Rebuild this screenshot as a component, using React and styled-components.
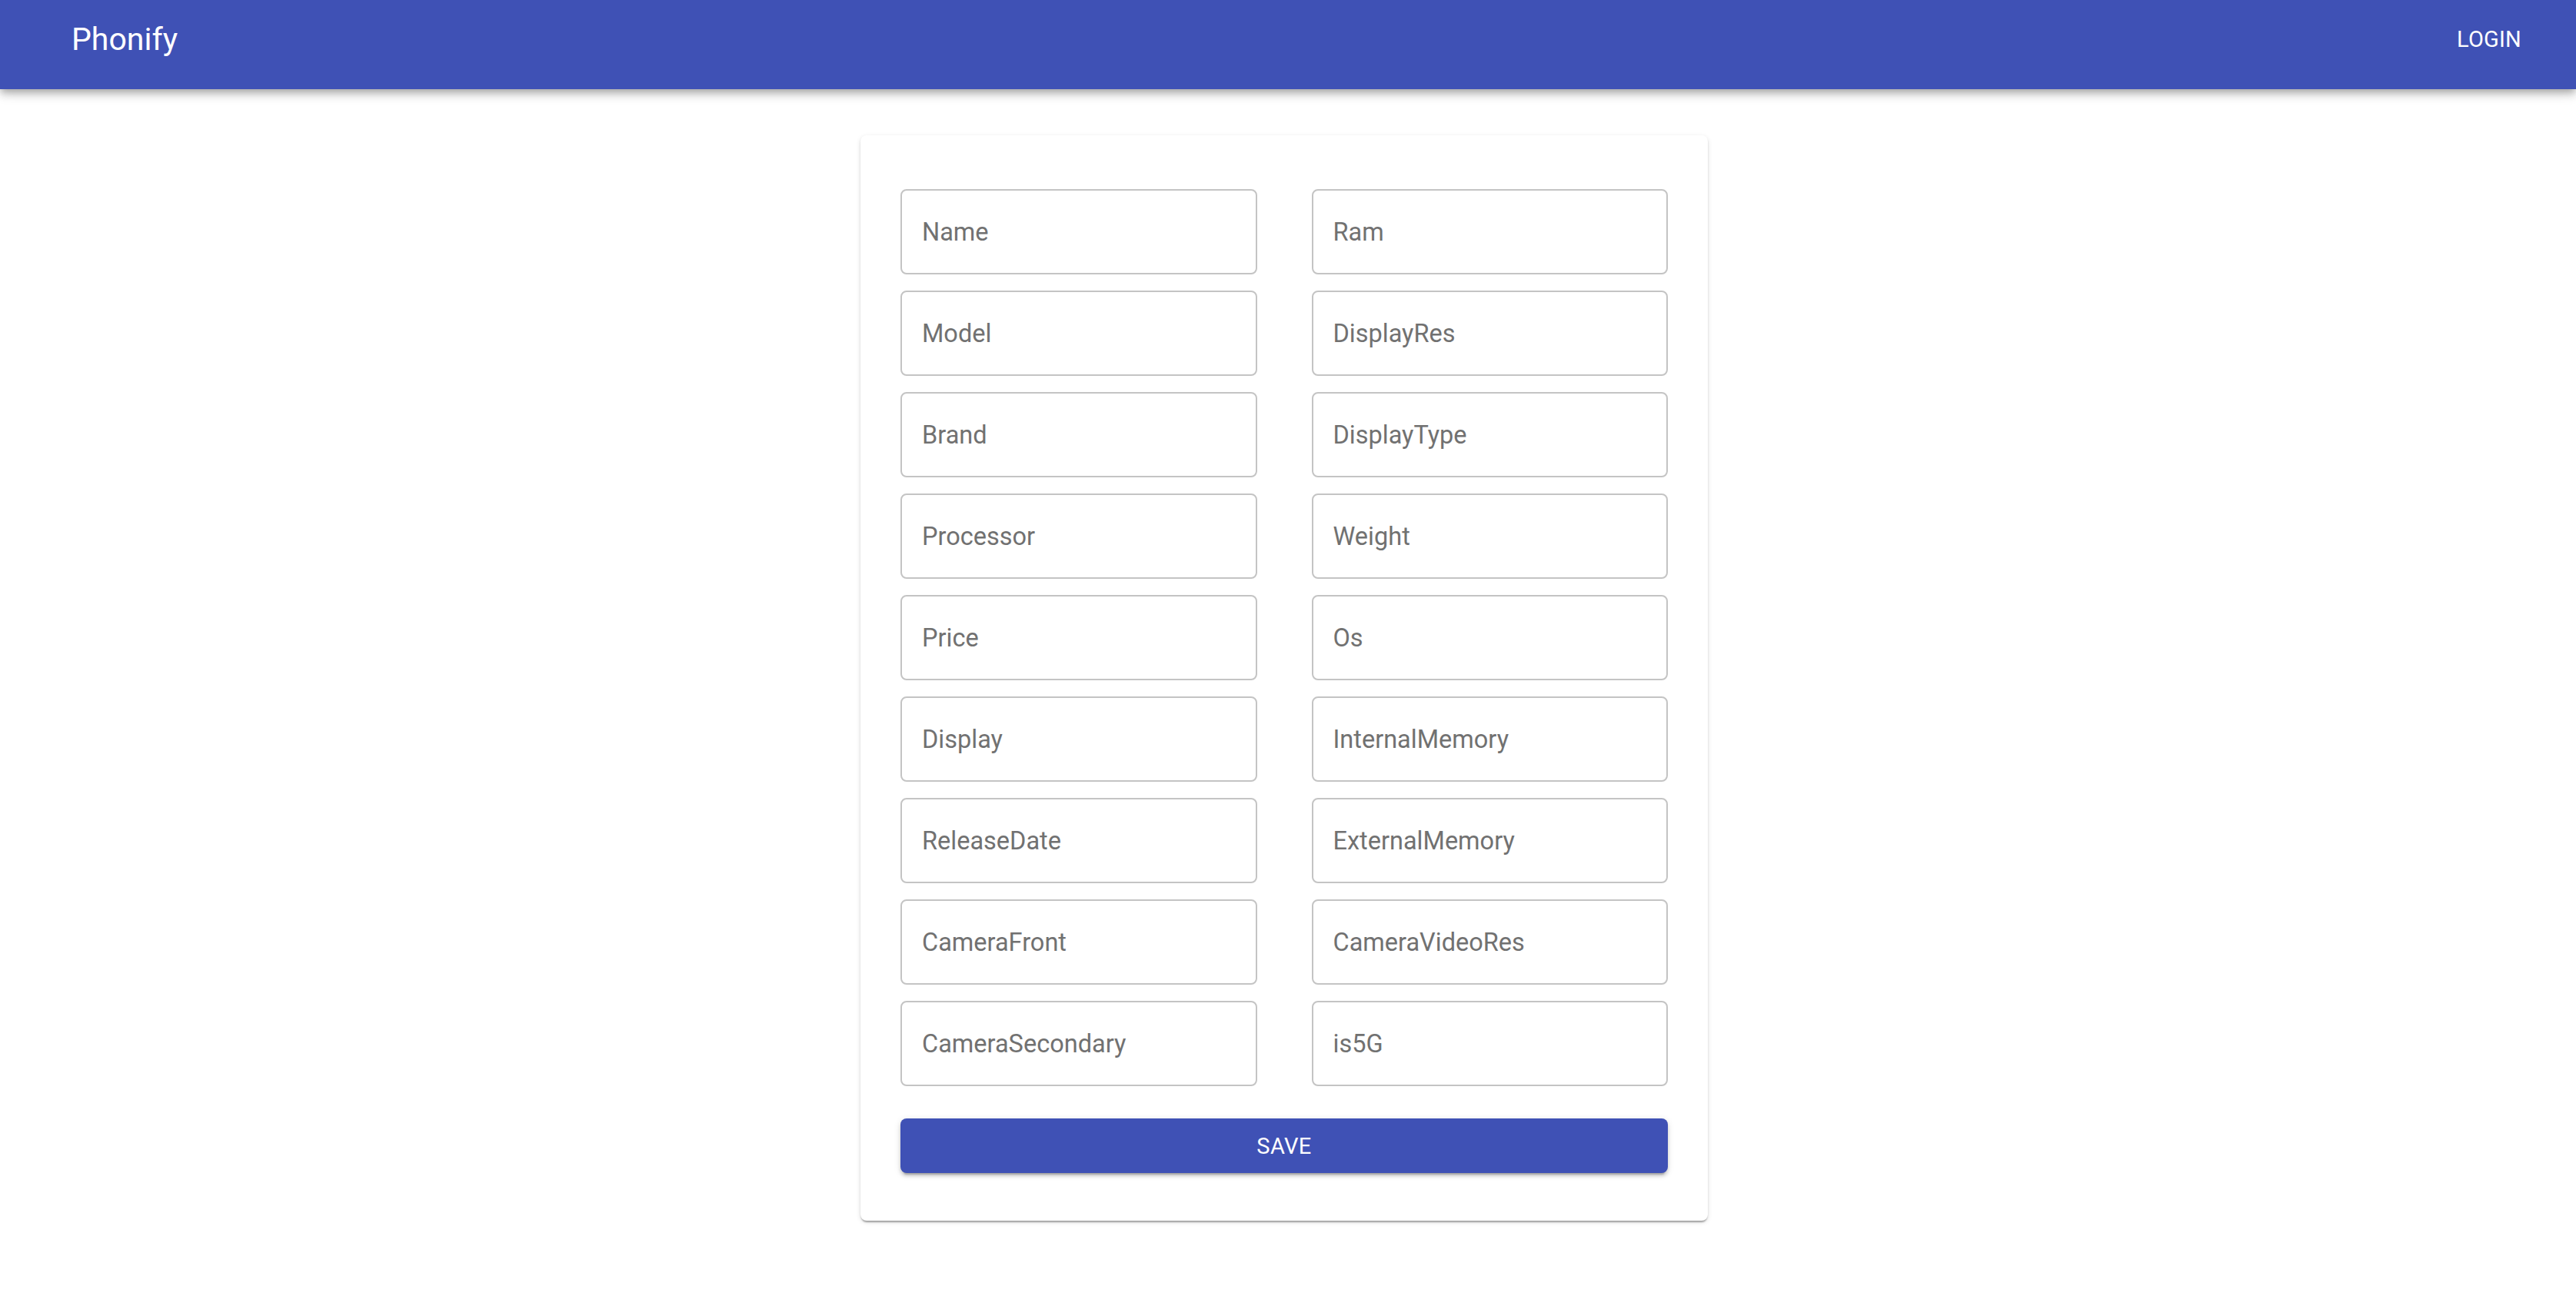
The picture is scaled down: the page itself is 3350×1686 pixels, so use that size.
import React from 'react';
import styled, { createGlobalStyle } from 'styled-components';

const GlobalStyle = createGlobalStyle`
  html, body {
    margin: 0;
    padding: 0;
    background: #fff;
    font-family: Roboto, "Liberation Sans", sans-serif;
  }
  * {
    box-sizing: border-box;
  }
`;

const Page = styled.div`
  min-height: 1686px;
  display: flex;
  flex-direction: column;
`;

const AppBar = styled.header`
  height: 116px;
  background-color: #3f51b5;
  color: #fff;
  display: flex;
  align-items: center;
  justify-content: space-between;
  padding: 0 71px 13px 93px;
  box-shadow: 0 4px 8px -2px rgba(0, 0, 0, 0.2), 0 8px 10px 0 rgba(0, 0, 0, 0.14),
    0 2px 20px 0 rgba(0, 0, 0, 0.12);
  position: relative;
  z-index: 2;
`;

const Title = styled.h1`
  margin: 0;
  font-size: 41px;
  font-weight: 400;
  line-height: 1.6;
  letter-spacing: 0;
`;

const NavButton = styled.button`
  background: none;
  border: none;
  color: #fff;
  font-family: inherit;
  font-size: 29px;
  font-weight: 400;
  letter-spacing: 0.2px;
  text-transform: uppercase;
  padding: 0;
  line-height: 1.75;
  cursor: pointer;
`;

const Main = styled.main`
  display: flex;
  justify-content: center;
  padding: 60px 10px 0 0;
`;

const Card = styled.form`
  width: 1102px;
  background: #fff;
  border-radius: 8px;
  padding: 70px 52px 62px;
  box-shadow: 0 4px 2px -2px rgba(0, 0, 0, 0.2), 0 2px 2px 0 rgba(0, 0, 0, 0.14),
    0 2px 6px 0 rgba(0, 0, 0, 0.12);
  display: flex;
  flex-direction: column;
`;

const FieldGrid = styled.div`
  display: grid;
  grid-template-columns: 1fr 1fr;
  grid-auto-flow: column;
  grid-template-rows: repeat(9, 111px);
  column-gap: 71px;
  row-gap: 21px;
`;

const Input = styled.input`
  width: 100%;
  height: 100%;
  border: 2px solid #c4c4c4;
  border-radius: 8px;
  padding: 0 26px;
  font-family: inherit;
  font-size: 32.5px;
  color: rgba(0, 0, 0, 0.87);
  background: transparent;
  outline: none;

  &::placeholder {
    color: #717171;
    opacity: 1;
  }
`;

const SaveButton = styled.button`
  margin-top: 42px;
  height: 71px;
  width: 100%;
  border: none;
  border-radius: 8px;
  background-color: #3f51b5;
  color: #fff;
  font-family: inherit;
  font-size: 29px;
  font-weight: 400;
  letter-spacing: 0.4px;
  text-transform: uppercase;
  box-shadow: 0 6px 2px -4px rgba(0, 0, 0, 0.2), 0 4px 4px 0 rgba(0, 0, 0, 0.14),
    0 2px 10px 0 rgba(0, 0, 0, 0.12);
  cursor: pointer;
`;

const fields = [
  'Name',
  'Model',
  'Brand',
  'Processor',
  'Price',
  'Display',
  'ReleaseDate',
  'CameraFront',
  'CameraSecondary',
  'Ram',
  'DisplayRes',
  'DisplayType',
  'Weight',
  'Os',
  'InternalMemory',
  'ExternalMemory',
  'CameraVideoRes',
  'is5G',
];

export default function App() {
  return (
    <>
      <GlobalStyle />
      <Page>
        <AppBar>
          <Title>Phonify</Title>
          <NavButton type="button">Login</NavButton>
        </AppBar>
        <Main>
          <Card onSubmit={(e) => e.preventDefault()}>
            <FieldGrid>
              {fields.map((name) => (
                <Input key={name} name={name} placeholder={name} />
              ))}
            </FieldGrid>
            <SaveButton type="submit">Save</SaveButton>
          </Card>
        </Main>
      </Page>
    </>
  );
}
